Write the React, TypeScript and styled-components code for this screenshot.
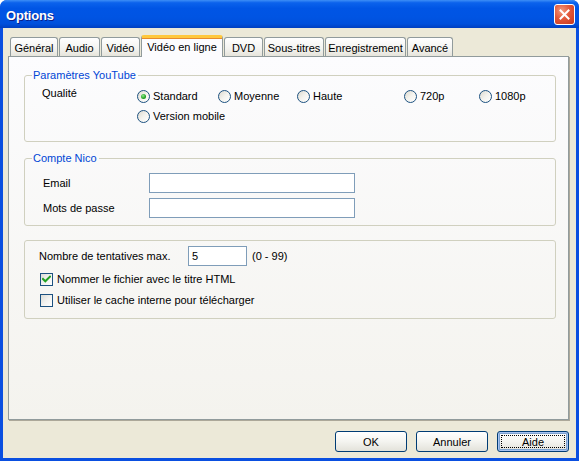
import React from 'react';
import styled, { createGlobalStyle, css } from 'styled-components';

const GlobalStyle = createGlobalStyle`
    html, body {
        margin: 0;
        padding: 0;
        background: #ffffff;
    }
    body {
        font-family: "Liberation Sans", Arial, sans-serif;
        font-size: 11px;
        color: #000;
    }
`;

const Window = styled.div`
    width: 579px;
    height: 461px;
    display: flex;
    flex-direction: column;
    border-radius: 7px 7px 0 0;
    overflow: hidden;
    background: #0a4fe0;
`;

const TitleBar = styled.div`
    height: 28px;
    flex: none;
    display: flex;
    align-items: center;
    justify-content: space-between;
    padding: 0 4px 0 6px;
    background: linear-gradient(
        to bottom,
        #3d8ef6 0%,
        #0b62ec 10%,
        #0055e5 30%,
        #0054e3 60%,
        #0050dc 85%,
        #003fc0 100%
    );
`;

const Title = styled.span`
    font-family: "Liberation Sans", Arial, sans-serif;
    font-weight: bold;
    font-size: 13px;
    letter-spacing: -0.2px;
    color: #fff;
    text-shadow: 1px 1px 0 #0a1f8a;
    margin-top: 2px;
`;

const CloseButton = styled.div`
    width: 21px;
    height: 21px;
    box-sizing: border-box;
    border: 1px solid #fff;
    border-radius: 3px;
    display: flex;
    align-items: center;
    justify-content: center;
    margin-top: 1px;
    background: radial-gradient(circle at 35% 30%, #f39a7e 0%, #e2583a 45%, #c6381c 100%);
`;

const Body = styled.div`
    flex: 1;
    display: flex;
    flex-direction: column;
    background: #ece9d8;
    margin: 0 3px 3px 3px;
    padding: 7px 7px 0 5px;
`;

const TabStrip = styled.div`
    display: flex;
    align-items: flex-end;
    height: 21px;
    padding-left: 2px;
    gap: 1px;
    position: relative;
    z-index: 1;
`;

const Tab = styled.div<{ $width: number; $active?: boolean }>`
    width: ${p => p.$width}px;
    box-sizing: border-box;
    height: 19px;
    padding-top: 1px;
    border: 1px solid #919b9c;
    border-bottom: none;
    border-radius: 3px 3px 0 0;
    background: linear-gradient(to bottom, #ffffff 0%, #f3f3ef 60%, #e6e4db 100%);
    display: flex;
    align-items: center;
    justify-content: center;
    white-space: nowrap;
    ${p =>
        p.$active &&
        css`
            height: 22px;
            margin-bottom: -1px;
            border-top: 3px solid #ffc83c;
            box-shadow: inset 0 1px 0 #e68b2c;
            background: #fcfcfe;
            padding-top: 0;
            padding-bottom: 2px;
        `}
`;

const Panel = styled.div`
    height: 364px;
    box-sizing: border-box;
    border: 1px solid #919b9c;
    box-shadow: 1px 1px 0 #aca899;
    background: linear-gradient(to bottom, #fcfcfe 0%, #f4f3ee 100%);
    padding: 11px 12px 0 15px;
    display: flex;
    flex-direction: column;
`;

const GroupBox = styled.fieldset<{ $top: number }>`
    margin: ${p => p.$top}px 0 0 0;
    padding: 0;
    border: 1px solid #d0d0bf;
    border-radius: 3px;
    min-inline-size: 0;
`;

const GroupContent = styled.div<{ $pad: string }>`
    padding: ${p => p.$pad};
`;

const Legend = styled.legend`
    color: #0046d5;
    font-size: 11px;
    line-height: 14px;
    padding: 0 2px 0 1px;
    margin-left: 7px;
`;

const QualityRow = styled.div`
    display: flex;
    align-items: flex-start;
`;

const FieldLabel = styled.span<{ $width: number; $raise?: number }>`
    width: ${p => p.$width}px;
    flex: none;
    line-height: 16px;
    margin-top: ${p => -(p.$raise ?? 0)}px;
`;

const RadioGrid = styled.div`
    display: grid;
    grid-template-columns: 81px 79px 107px 75px auto;
    row-gap: 4px;
`;

const OptionItem = styled.label`
    display: flex;
    align-items: center;
    gap: 3px;
    height: 16px;
    white-space: nowrap;
`;

const RadioCircle = styled.span<{ $checked?: boolean }>`
    width: 13px;
    height: 13px;
    box-sizing: border-box;
    border-radius: 50%;
    border: 1px solid #1c5180;
    background: linear-gradient(135deg, #dcd9cf 0%, #f4f3ee 50%, #ffffff 100%);
    display: flex;
    align-items: center;
    justify-content: center;
    flex: none;
    &::after {
        content: '';
        width: 5px;
        height: 5px;
        border-radius: 50%;
        background: radial-gradient(circle at 40% 35%, #8ee88e 0%, #21a121 60%, #128412 100%);
        display: ${p => (p.$checked ? 'block' : 'none')};
    }
`;

const CheckSquare = styled.span`
    width: 13px;
    height: 13px;
    box-sizing: border-box;
    border: 1px solid #1c5180;
    background: linear-gradient(135deg, #dcdcd7 0%, #f2f2ef 50%, #ffffff 100%);
    display: flex;
    align-items: center;
    justify-content: center;
    flex: none;
`;

const FormRow = styled.div`
    display: flex;
    align-items: center;
    height: 20px;
`;

const TextBox = styled.input<{ $width: number }>`
    width: ${p => p.$width}px;
    height: 20px;
    box-sizing: border-box;
    border: 1px solid #7f9db9;
    background: #fff;
    font-family: "Liberation Sans", Arial, sans-serif;
    font-size: 11px;
    padding: 0 3px;
    margin: 0;
    outline: none;
`;

const Stack = styled.div<{ $gap: number }>`
    display: flex;
    flex-direction: column;
    gap: ${p => p.$gap}px;
`;

const RangeHint = styled.span`
    margin-left: 5px;
`;

const CheckRow = styled(OptionItem)`
    margin-left: 1px;
    gap: 4px;
`;

const ButtonRow = styled.div`
    display: flex;
    justify-content: flex-end;
    gap: 9px;
    margin-top: 11px;
`;

const Button = styled.button<{ $focused?: boolean }>`
    width: 72px;
    height: 21px;
    box-sizing: border-box;
    border: 1px solid #003c74;
    border-radius: 3px;
    background: linear-gradient(to bottom, #ffffff 0%, #f4f4f0 50%, #e3e2da 100%);
    font-family: "Liberation Sans", Arial, sans-serif;
    font-size: 11px;
    color: #000;
    padding: 0;
    position: relative;
    ${p =>
        p.$focused &&
        css`
            box-shadow: inset 0 0 0 1px #a6c2f2, inset 0 0 0 2px #7da2ce;
            &::after {
                content: '';
                position: absolute;
                inset: 3px;
                border: 1px dotted #000;
            }
        `}
`;

const tabs = [
    { label: 'Général', width: 48 },
    { label: 'Audio', width: 41 },
    { label: 'Vidéo', width: 39 },
    { label: 'Vidéo en ligne', width: 82, active: true },
    { label: 'DVD', width: 39 },
    { label: 'Sous-titres', width: 60 },
    { label: 'Enregistrement', width: 81 },
    { label: 'Avancé', width: 46 },
];

const qualities = [
    { label: 'Standard', checked: true },
    { label: 'Moyenne' },
    { label: 'Haute' },
    { label: '720p' },
    { label: '1080p' },
    { label: 'Version mobile' },
];

const CheckMark = () => (
    <svg width="9" height="9" viewBox="0 0 9 9">
        <path d="M1 4 L3.3 6.3 L8 1.6" fill="none" stroke="#21a121" strokeWidth="2" strokeLinecap="square" />
    </svg>
);

const App = () => {
    return (
        <>
            <GlobalStyle />
            <Window>
                <TitleBar>
                    <Title>Options</Title>
                    <CloseButton>
                        <svg width="11" height="11" viewBox="0 0 11 11">
                            <path d="M1.5 1.5 L9.5 9.5 M9.5 1.5 L1.5 9.5" stroke="#fff" strokeWidth="2" strokeLinecap="square" />
                        </svg>
                    </CloseButton>
                </TitleBar>

                <Body>
                    <TabStrip>
                        {tabs.map(t => (
                            <Tab key={t.label} $width={t.width} $active={t.active}>
                                {t.label}
                            </Tab>
                        ))}
                    </TabStrip>

                    <Panel>
                        <GroupBox $top={0}>
                            <Legend>Paramètres YouTube</Legend>
                            <GroupContent $pad="6px 0 17px 17px">
                                <QualityRow>
                                    <FieldLabel $width={95} $raise={3}>Qualité</FieldLabel>
                                    <RadioGrid>
                                        {qualities.map(q => (
                                            <OptionItem key={q.label}>
                                                <RadioCircle $checked={q.checked} />
                                                {q.label}
                                            </OptionItem>
                                        ))}
                                    </RadioGrid>
                                </QualityRow>
                            </GroupContent>
                        </GroupBox>

                        <GroupBox $top={9}>
                            <Legend>Compte Nico</Legend>
                            <GroupContent $pad="8px 0 7px 18px">
                                <Stack $gap={5}>
                                    <FormRow>
                                        <FieldLabel $width={106}>Email</FieldLabel>
                                        <TextBox $width={206} />
                                    </FormRow>
                                    <FormRow>
                                        <FieldLabel $width={106}>Mots de passe</FieldLabel>
                                        <TextBox $width={206} type="password" />
                                    </FormRow>
                                </Stack>
                            </GroupContent>
                        </GroupBox>

                        <GroupBox $top={14}>
                            <GroupContent $pad="5px 0 10px 14px">
                                <Stack $gap={5}>
                                    <FormRow>
                                        <FieldLabel $width={149}>Nombre de tentatives max.</FieldLabel>
                                        <TextBox $width={59} defaultValue="5" />
                                        <RangeHint>(0 - 99)</RangeHint>
                                    </FormRow>
                                    <CheckRow>
                                        <CheckSquare>
                                            <CheckMark />
                                        </CheckSquare>
                                        Nommer le fichier avec le titre HTML
                                    </CheckRow>
                                    <CheckRow>
                                        <CheckSquare />
                                        Utiliser le cache interne pour télécharger
                                    </CheckRow>
                                </Stack>
                            </GroupContent>
                        </GroupBox>
                    </Panel>

                    <ButtonRow>
                        <Button>OK</Button>
                        <Button>Annuler</Button>
                        <Button $focused>Aide</Button>
                    </ButtonRow>
                </Body>
            </Window>
        </>
    );
};

export default App;
